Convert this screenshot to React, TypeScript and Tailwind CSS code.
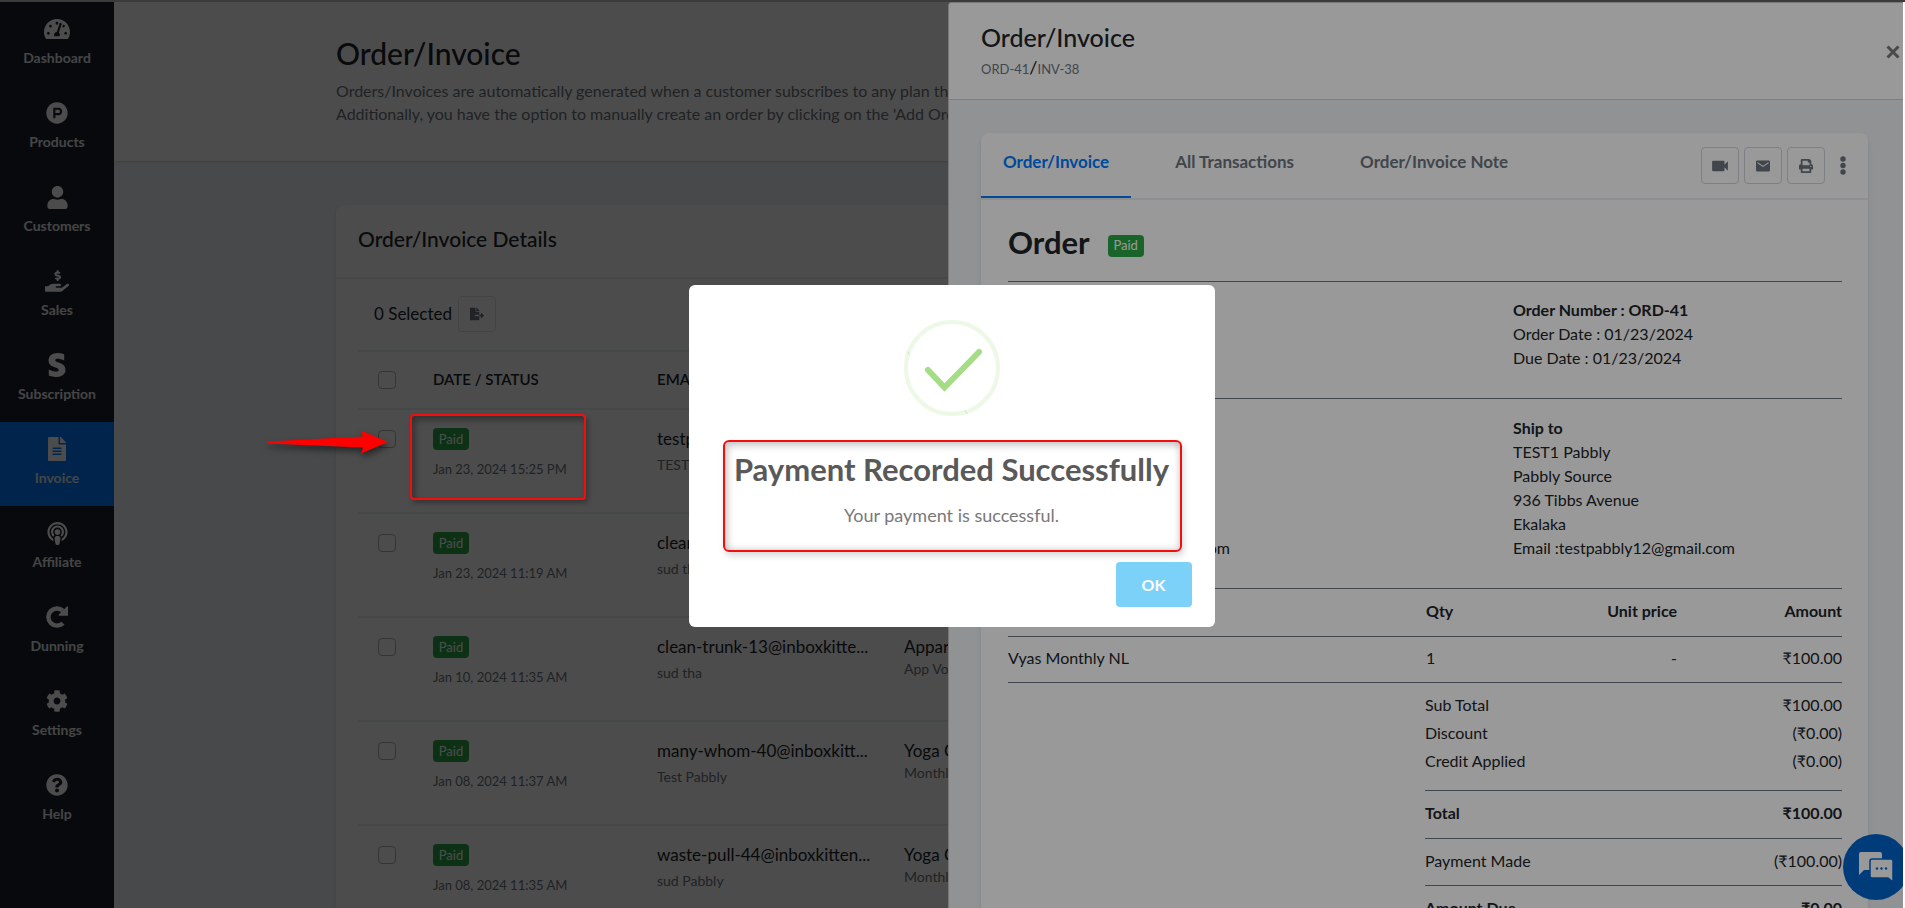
import React from "react";
import {
  FaTachometerAlt,
  FaProductHunt,
  FaUser,
  FaHandHoldingUsd,
  FaStripeS,
  FaFileAlt,
  FaPodcast,
  FaCog,
  FaQuestionCircle,
  FaFileExport,
  FaPrint,
} from "react-icons/fa";
import { IoMdVideocam, IoMdMail } from "react-icons/io";

function RepeatIcon() {
  return (
    <svg viewBox="0 0 22 22" className="size-[22px]" fill="none" aria-hidden="true">
      <path d="M17 17.2A8.6 8.6 0 1 1 16.8 4.7" stroke="currentColor" strokeWidth="4.4" />
      <path d="M22 .9v8.3a.6.6 0 0 1-.6.6h-8.1c-.7 0-1-.8-.5-1.300L20.900.400c.500-.500 1.100-.200 1.100.500z" fill="currentColor" />
    </svg>
  );
}

const navItems = [
  { label: "Dashboard", icon: <FaTachometerAlt size={26} /> },
  { label: "Products", icon: <FaProductHunt size={22} /> },
  { label: "Customers", icon: <FaUser size={23} /> },
  { label: "Sales", icon: <FaHandHoldingUsd size={24} /> },
  { label: "Subscription", icon: <FaStripeS size={24} /> },
  { label: "Invoice", icon: <FaFileAlt size={24} />, active: true },
  { label: "Affiliate", icon: <FaPodcast size={23} /> },
  { label: "Dunning", icon: <RepeatIcon /> },
  { label: "Settings", icon: <FaCog size={22} /> },
  { label: "Help", icon: <FaQuestionCircle size={22} /> },
];

const orders = [
  { date: "Jan 23, 2024 15:25 PM", email: "testpabbly12@gmail.com", name: "TEST1 Pabbly", product: "Vyas", plan: "Monthly" },
  { date: "Jan 23, 2024 11:19 AM", email: "clean-trunk-13@inboxkitte...", name: "sud tha", product: "Yoga", plan: "Monthly" },
  { date: "Jan 10, 2024 11:35 AM", email: "clean-trunk-13@inboxkitte...", name: "sud tha", product: "Apparel", plan: "App Volume" },
  { date: "Jan 08, 2024 11:37 AM", email: "many-whom-40@inboxkitt...", name: "Test Pabbly", product: "Yoga Class", plan: "Monthly" },
  { date: "Jan 08, 2024 11:35 AM", email: "waste-pull-44@inboxkitten...", name: "sud Pabbly", product: "Yoga Class", plan: "Monthly" },
];

function Paid() {
  return (
    <span className="inline-flex h-[22px] w-9 items-center justify-center rounded bg-[#28a745] text-[13px] leading-none text-white">
      Paid
    </span>
  );
}

function Check({ label }: { label: string }) {
  return (
    <input
      type="checkbox"
      aria-label={label}
      className="block size-[18px] appearance-none rounded border border-[#adb5bd] bg-white"
    />
  );
}

function Sidebar() {
  return (
    <nav className="flex w-[114px] shrink-0 flex-col bg-[#1b2128] text-white">
      {navItems.map((item) => (
        <a
          key={item.label}
          href="#"
          className={
            item.active
              ? "flex h-[84px] shrink-0 flex-col items-center bg-[#007bff] pt-[15px]"
              : "flex h-[84px] shrink-0 flex-col items-center pt-[15px]"
          }
        >
          <span className="flex h-6 items-center">{item.icon}</span>
          <span className="mt-2 text-sm leading-[18px] font-bold text-[#e4e6e8]">{item.label}</span>
        </a>
      ))}
    </nav>
  );
}

function OrdersPage() {
  return (
    <main className="flex min-w-0 flex-1 flex-col bg-[#f2f4f8]">
      <header className="h-[159px] shrink-0 bg-white pt-[31px] pl-[222px] shadow">
        <h1 className="text-[30px] leading-10 font-medium text-[#212529]">Order/Invoice</h1>
        <p className="mt-1.5 text-base leading-[23px] whitespace-nowrap text-[#6c757d]">
          Orders/Invoices are automatically generated when a customer subscribes to any plan that you have created.
          <br />
          Additionally, you have the option to manually create an order by clicking on the 'Add Order' button.
        </p>
      </header>
      <section className="mt-11 mr-[222px] ml-[222px] flex-1 rounded-t-lg bg-white shadow">
        <div className="flex h-[74px] items-center border-b-2 border-[#e9f0f7] px-[22px] pb-1">
          <h2 className="text-[21px] leading-6 font-medium text-[#212529]">Order/Invoice Details</h2>
        </div>
        <div className="px-[22px]">
          <div className="flex h-[71px] items-center gap-1.5 pb-0.5 pl-4 text-[#212529]">
            <span className="text-[17px]">0 Selected</span>
            <button type="button" aria-label="Export" className="flex h-9 w-[38px] items-center justify-center rounded border border-[#dee2e6] text-[#6c757d]">
              <FaFileExport size={14} />
            </button>
          </div>
          <table className="w-full table-fixed border-collapse text-left">
            <colgroup>
              <col className="w-[75px]" />
              <col className="w-[224px]" />
              <col className="w-[247px]" />
              <col />
            </colgroup>
            <thead>
              <tr className="h-[58px] border-y-2 border-[#e9f0f7] text-[15px] text-[#212529]">
                <th className="pl-5"><Check label="Select all" /></th>
                <th className="pb-0.5 font-semibold">DATE / STATUS</th>
                <th className="pb-0.5 font-semibold">EMAIL</th>
                <th className="pb-0.5 font-semibold">PRODUCT</th>
              </tr>
            </thead>
            <tbody>
              {orders.map((o, i) => (
                <tr key={i} className="h-[104px] border-b-2 border-[#e9f0f7] align-top whitespace-nowrap">
                  <td className="pt-5 pl-5"><Check label={"Select order " + (i + 1)} /></td>
                  <td className="pt-[18px]">
                    <div className="flex flex-col items-start gap-[9px]">
                      <Paid />
                      <span className="text-[13px] leading-5 text-[#6c757d]">{o.date}</span>
                    </div>
                  </td>
                  <td className="pt-[17px] text-[#212529]">
                    <div className="text-[17px] leading-6">{o.email}</div>
                    <div className="mt-1 text-sm leading-5 text-[#6c757d]">{o.name}</div>
                  </td>
                  <td className="pt-[17px] text-[#212529]">
                    <div className="text-[17px] leading-6">{o.product}</div>
                    <div className="text-sm leading-5 text-[#6c757d]">{o.plan}</div>
                  </td>
                </tr>
              ))}
            </tbody>
          </table>
        </div>
      </section>
    </main>
  );
}

function SummaryRow({ label, value, strong }: { label: string; value: string; strong?: boolean }) {
  return (
    <div className={strong ? "flex justify-between font-bold" : "flex justify-between"}>
      <span>{label}</span>
      <span>{value}</span>
    </div>
  );
}

const address = ["TEST1 Pabbly", "Pabbly Source", "936 Tibbs Avenue", "Ekalaka", "Email :testpabbly12@gmail.com"];

function Address({ title }: { title: string }) {
  return (
    <div className="leading-6">
      <div className="font-bold">{title}</div>
      {address.map((line) => (
        <div key={line}>{line}</div>
      ))}
    </div>
  );
}

function Drawer() {
  const iconButton = "flex h-[37px] w-[38px] items-center justify-center rounded border border-[#cfd6dd] text-[#6c757d]";
  return (
    <aside className="absolute inset-y-0 right-0 flex w-[955px] flex-col overflow-hidden rounded-tl border-t border-l border-[#c8c8c8] bg-[#f1f3f7] text-[#212529]">
      <header className="flex h-[97px] shrink-0 items-start justify-between border-b border-[#c8d6e8] bg-white pt-[18px] pr-0.5 pl-8">
        <div>
          <h2 className="text-[25px] leading-8 font-medium">Order/Invoice</h2>
          <p className="mt-1 text-[13px] leading-6 text-[#6c757d]">
            ORD-41<span className="text-lg leading-none text-[#212529]">/</span>INV-38
          </p>
        </div>
        <button type="button" aria-label="Close" className="mt-[23px] flex size-4 items-center justify-center text-[#7a7a7a]">
          <svg viewBox="0 0 14 14" className="size-3.5" aria-hidden="true">
            <path d="M1.500 1.500l11 11M12.500 1.500L1.500 12.500" stroke="currentColor" strokeWidth="3" />
          </svg>
        </button>
      </header>
      <div className="mt-[33px] mr-[35px] ml-8 flex-1 rounded-t-lg bg-white shadow-md">
        <div className="flex h-[67px] items-start justify-between border-b-2 border-[#eaf0f6]">
          <div role="tablist" className="flex gap-[22px] text-[17px] font-bold text-[#6c757d]">
            <button role="tab" aria-selected="true" type="button" className="h-[65px] border-b-2 border-[#007bff] px-[22px] pb-1.5 text-[#007bff]">Order/Invoice</button>
            <button role="tab" aria-selected="false" type="button" className="h-[65px] px-[22px] pb-2">All Transactions</button>
            <button role="tab" aria-selected="false" type="button" className="h-[65px] px-[22px] pb-2">Order/Invoice Note</button>
          </div>
          <div className="flex items-center gap-[5px] pt-3.5 pr-3">
            <button type="button" aria-label="Video" className={iconButton}><IoMdVideocam size={18} /></button>
            <button type="button" aria-label="Email" className={iconButton}><IoMdMail size={16} /></button>
            <button type="button" aria-label="Print" className={iconButton}><FaPrint size={14} /></button>
            <button type="button" aria-label="More" className="flex h-[37px] w-[26px] items-center justify-center text-[#6c757d]">
              <svg viewBox="0 0 6 20" className="h-5 w-1.5" fill="currentColor" aria-hidden="true">
                <circle cx="3" cy="3" r="2.700" />
                <circle cx="3" cy="9.500" r="2.700" />
                <circle cx="3" cy="16" r="2.700" />
              </svg>
            </button>
          </div>
        </div>
        <div className="pr-[26px] pl-[27px] text-base">
          <div className="flex h-[82px] items-center gap-[18px] border-b border-[#6c757d] pt-0.5">
            <h3 className="text-[31px] leading-9 font-bold">Order</h3>
            <span className="flex pt-2"><Paid /></span>
          </div>
          <div className="grid h-[117px] grid-cols-[505px_1fr] border-b border-[#6c757d] pt-4">
            <div />
            <div className="leading-6">
              <div className="font-bold">Order Number : ORD-41</div>
              <div>Order Date : 01/23/2024</div>
              <div>Due Date : 01/23/2024</div>
            </div>
          </div>
          <div className="grid h-[190px] grid-cols-[505px_1fr] border-b border-[#6c757d] pt-[17px]">
            <Address title="Bill to" />
            <Address title="Ship to" />
          </div>
          <table className="w-full table-fixed border-collapse">
            <colgroup>
              <col />
              <col className="w-[100px]" />
              <col className="w-[151px]" />
              <col className="w-[165px]" />
            </colgroup>
            <thead>
              <tr className="h-[47px] border-b border-[#6c757d]">
                <th className="pb-0.5 text-left font-bold">Description</th>
                <th className="pb-0.5 text-left font-bold">Qty</th>
                <th className="pb-0.5 text-right font-bold">Unit price</th>
                <th className="pb-0.5 text-right font-bold">Amount</th>
              </tr>
            </thead>
            <tbody>
              <tr className="h-[46px] border-b border-[#6c757d]">
                <td className="pb-0.5">Vyas Monthly NL</td>
                <td className="pb-0.5">1</td>
                <td className="pb-0.5 text-right">-</td>
                <td className="pb-0.5 text-right">₹100.00</td>
              </tr>
            </tbody>
          </table>
          <div className="ml-auto w-[417px]">
            <div className="flex h-[108px] flex-col gap-1 border-b border-[#6c757d] pt-2.5">
              <SummaryRow label="Sub Total" value="₹100.00" />
              <SummaryRow label="Discount" value="(₹0.00)" />
              <SummaryRow label="Credit Applied" value="(₹0.00)" />
            </div>
            <div className="h-12 border-b border-[#6c757d] pt-2.5"><SummaryRow label="Total" value="₹100.00" strong /></div>
            <div className="h-[47px] border-b border-[#6c757d] pt-2.5"><SummaryRow label="Payment Made" value="(₹100.00)" /></div>
            <div className="h-12 pt-2.5"><SummaryRow label="Amount Due" value="₹0.00" strong /></div>
          </div>
        </div>
      </div>
      <button type="button" aria-label="Chat" className="absolute -right-1.5 bottom-2 flex size-[66px] items-center justify-center rounded-full bg-[#0065cb]">
        <svg viewBox="0 0 36 32" className="h-8 w-9" aria-hidden="true">
          <path d="M3 1h19a2 2 0 0 1 2 2v14a2 2 0 0 1-2 2H6l-5 5V3a2 2 0 0 1 2-2z" fill="#fff" />
          <path d="M14 8h19a2 2 0 0 1 2 2v21l-5-4H14a2 2 0 0 1-2-2V10a2 2 0 0 1 2-2z" fill="#fff" stroke="#0065cb" strokeWidth="1.500" />
          <circle cx="19" cy="17.500" r="1.200" fill="#0065cb" />
          <circle cx="23.500" cy="17.500" r="1.200" fill="#0065cb" />
          <circle cx="28" cy="17.500" r="1.200" fill="#0065cb" />
        </svg>
      </button>
    </aside>
  );
}

function SuccessModal() {
  return (
    <div className="absolute inset-0 flex items-center justify-center bg-black/40 pt-0.5">
      <div role="dialog" aria-labelledby="done-title" className="relative flex w-[526px] flex-col rounded-md bg-white px-[23px] pt-[35px] pb-5">
        <svg viewBox="0 0 96 96" className="mx-auto size-24" fill="none" aria-hidden="true">
          <circle cx="48" cy="48" r="46" stroke="#edf8e7" strokeWidth="4" />
          <path d="M3.500 31.500l2 3M61 90.500l2.500 3" stroke="#c5e8b1" strokeWidth="1" />
          <path d="M24 50L40.500 67.500 75 32" stroke="#a5dc86" strokeWidth="6" strokeLinecap="round" />
        </svg>
        <h2 id="done-title" className="mt-[35px] text-center text-[31px] leading-9 font-bold whitespace-nowrap text-[#595959]">Payment Recorded Successfully</h2>
        <p className="mt-4 text-center text-lg leading-6 text-[#797979]">Your payment is successful.</p>
        <button type="button" className="mt-[35px] flex h-[45px] w-[76px] items-center justify-center self-end rounded bg-[#7cd1f9] text-base font-bold text-white">
          OK
        </button>
        <div className="pointer-events-none absolute top-[155px] right-[33px] left-[34px] h-[112px] rounded-md border-2 border-[#f40d0d] shadow-[2px_4px_6px_rgba(0,0,0,0.15),inset_3px_4px_7px_rgba(0,0,0,0.2),inset_-2px_-2px_6px_rgba(0,0,0,0.12)]" />
      </div>
    </div>
  );
}

function Annotations() {
  return (
    <div className="pointer-events-none absolute inset-0">
      <div className="absolute top-[412px] left-[410px] h-[86px] w-[176px] rounded border-2 border-[#f40d0d] shadow-[2px_3px_5px_rgba(0,0,0,0.3),inset_3px_4px_6px_rgba(0,0,0,0.35)]" />
      <svg viewBox="0 0 130 40" className="absolute top-[421px] left-[264px] h-10 w-[130px] drop-shadow-[1px_4px_3px_rgba(0,0,0,0.5)]" aria-hidden="true">
        <path d="M4 18.500L99 13.500 97 7.500 124 19 97 30.500 99 24.500 4 20.500a1 1 0 0 1 0-2z" fill="#f00" />
      </svg>
    </div>
  );
}

export default function App() {
  return (
    <div className="flex h-screen flex-col overflow-hidden bg-white font-[Lato,'Noto_Sans',sans-serif]">
      <div className="h-0.5 shrink-0 bg-[#3b3b3b]" />
      <div className="min-h-0 flex-1 pr-0.5">
        <div className="relative flex h-full overflow-hidden">
          <Sidebar />
          <OrdersPage />
          <div className="absolute inset-0 bg-black/50" />
          <Drawer />
          <SuccessModal />
          <Annotations />
        </div>
      </div>
    </div>
  );
}
